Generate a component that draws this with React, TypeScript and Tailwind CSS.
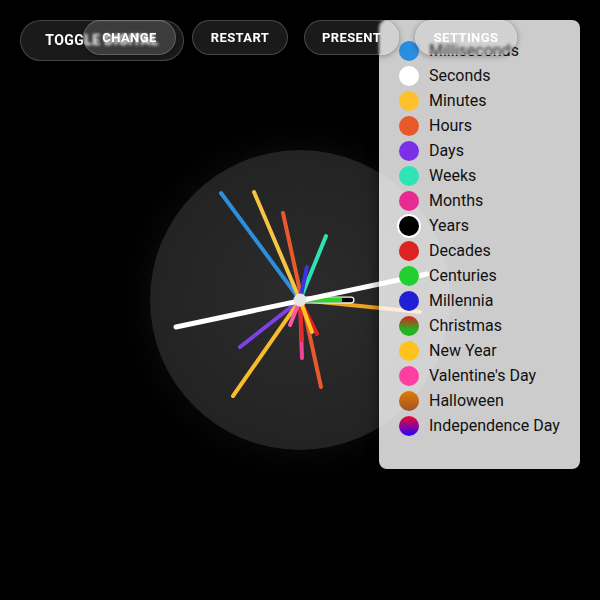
import React from 'react';

// ============================================================================
// DATA
// ============================================================================

const units = [
  { label: 'Milliseconds', dot: 'bg-[#2a8ee0]' },
  { label: 'Seconds', dot: 'bg-white' },
  { label: 'Minutes', dot: 'bg-[#ffc12b]' },
  { label: 'Hours', dot: 'bg-[#e9582b]' },
  { label: 'Days', dot: 'bg-[#7a30e8]' },
  { label: 'Weeks', dot: 'bg-[#2ee3b4]' },
  { label: 'Months', dot: 'bg-[#e92a92]' },
  { label: 'Years', dot: 'bg-black ring-2 ring-white' },
  { label: 'Decades', dot: 'bg-[#dd2222]' },
  { label: 'Centuries', dot: 'bg-[#20d02e]' },
  { label: 'Millennia', dot: 'bg-[#1f1fd6]' },
  { label: 'Christmas', dot: 'bg-[linear-gradient(180deg,#e11d1d_0%,#22b522_70%)]' },
  { label: 'New Year', dot: 'bg-[#ffc21f]' },
  { label: "Valentine's Day", dot: 'bg-[#ff3ea2]' },
  { label: 'Halloween', dot: 'bg-[linear-gradient(180deg,#e57b00_0%,#9d5428_100%)]' },
  { label: 'Independence Day', dot: 'bg-[linear-gradient(180deg,#ee0a2c_0%,#2a00ff_100%)]' },
];

// hands in page coordinates, clock centre at (300, 300)
const hands = [
  { x1: 300, y1: 300, x2: 221, y2: 193, color: '#2d8fdc', w: 4 },
  { x1: 300, y1: 300, x2: 254, y2: 192, color: '#f6c443', w: 4 },
  { x1: 283, y1: 213, x2: 321, y2: 387, color: '#e8592d', w: 4 },
  { x1: 300, y1: 300, x2: 326, y2: 236, color: '#2fe2b6', w: 4 },
  { x1: 300, y1: 300, x2: 307, y2: 267, color: '#3a35e0', w: 4 },
  { x1: 300, y1: 300, x2: 240, y2: 347, color: '#8040e8', w: 4 },
  { x1: 300, y1: 300, x2: 233, y2: 396, color: '#f8bb2c', w: 4 },
  { x1: 300, y1: 300, x2: 302, y2: 358, color: '#ec4592', w: 4 },
  { x1: 300, y1: 300, x2: 302, y2: 340, color: '#e32b2b', w: 4 },
  { x1: 300, y1: 300, x2: 290, y2: 325, color: '#ff55aa', w: 4 },
  { x1: 300, y1: 300, x2: 317, y2: 334, color: '#e0201c', w: 4 },
  { x1: 300, y1: 300, x2: 312, y2: 332, color: '#ffc524', w: 4 },
  { x1: 300, y1: 300, x2: 420, y2: 312, color: '#efa322', w: 4 },
];

// ============================================================================
// PIECES
// ============================================================================

function PillButton({ label, className = '' }: { label: string; className?: string }) {
  return (
    <button
      className={`flex items-center justify-center rounded-full border border-white/20 backdrop-blur-[1.5px] font-bold uppercase tracking-[0.4px] text-white shadow-[0_1px_6px_rgba(0,0,0,0.35)] ${className}`}
    >
      {label}
    </button>
  );
}

function ClockFace() {
  return (
    <div className="mx-auto mt-[89px] h-[300px] w-[300px] rounded-full bg-[radial-gradient(circle,#2c2c2c_0%,#232323_70%,#1d1d1d_94%,#262626_100%)] shadow-[0_0_40px_rgba(255,255,255,0.06)]">
      <svg width="300" height="300" viewBox="150 150 300 300" className="overflow-visible">
        {hands.map((h, i) => (
          <line key={i} x1={h.x1} y1={h.y1} x2={h.x2} y2={h.y2} stroke={h.color} strokeWidth={h.w} strokeLinecap="round" />
        ))}
        {/* years: black hand with white edge */}
        <line x1="300" y1="300" x2="351" y2="300" stroke="#ffffff" strokeWidth="7" strokeLinecap="round" />
        <line x1="300" y1="300" x2="351" y2="300" stroke="#000000" strokeWidth="4.5" strokeLinecap="round" />
        {/* centuries */}
        <line x1="300" y1="300" x2="342" y2="300" stroke="#2bd62b" strokeWidth="4.5" strokeLinecap="butt" />
        {/* seconds */}
        <line x1="176" y1="327" x2="427" y2="274" stroke="#ffffff" strokeWidth="5" strokeLinecap="round" />
        <circle cx="300" cy="300" r="6.5" fill="#e4e4e4" />
      </svg>
    </div>
  );
}

function SettingsPanel() {
  return (
    <div className="absolute left-[379px] top-5 z-10 h-[449px] w-[201px] rounded-lg bg-white/80 pl-5 pt-[18px] shadow-[0_4px_14px_rgba(0,0,0,0.5)]">
      {units.map((u) => (
        <div key={u.label} className="flex h-[25px] items-center gap-[10px]">
          <span className={`h-5 w-5 shrink-0 rounded-full ${u.dot}`} />
          <span className="text-[16px] leading-none text-[#111111]">{u.label}</span>
        </div>
      ))}
    </div>
  );
}

// ============================================================================
// APP
// ============================================================================

export default function App() {
  return (
    <div className="relative h-[600px] w-[600px] overflow-hidden bg-black font-['Roboto','Liberation_Sans',sans-serif]">
      <div className="relative z-20 flex items-start gap-4 pl-5 pt-5">
        <PillButton label="Toggle Digital" className="h-[41px] w-[164px] bg-white/10 text-[14px]" />
        <PillButton label="Change" className="ml-[-117px] h-[35px] w-[93px] bg-white/15 text-[13px]" />
        <PillButton label="Restart" className="h-[35px] w-[96px] bg-white/10 text-[13px]" />
        <PillButton label="Present" className="h-[35px] w-[95px] bg-white/10 text-[13px]" />
        <PillButton label="Settings" className="h-[35px] w-[102px] bg-white/10 text-[13px]" />
      </div>
      <ClockFace />
      <SettingsPanel />
    </div>
  );
}
